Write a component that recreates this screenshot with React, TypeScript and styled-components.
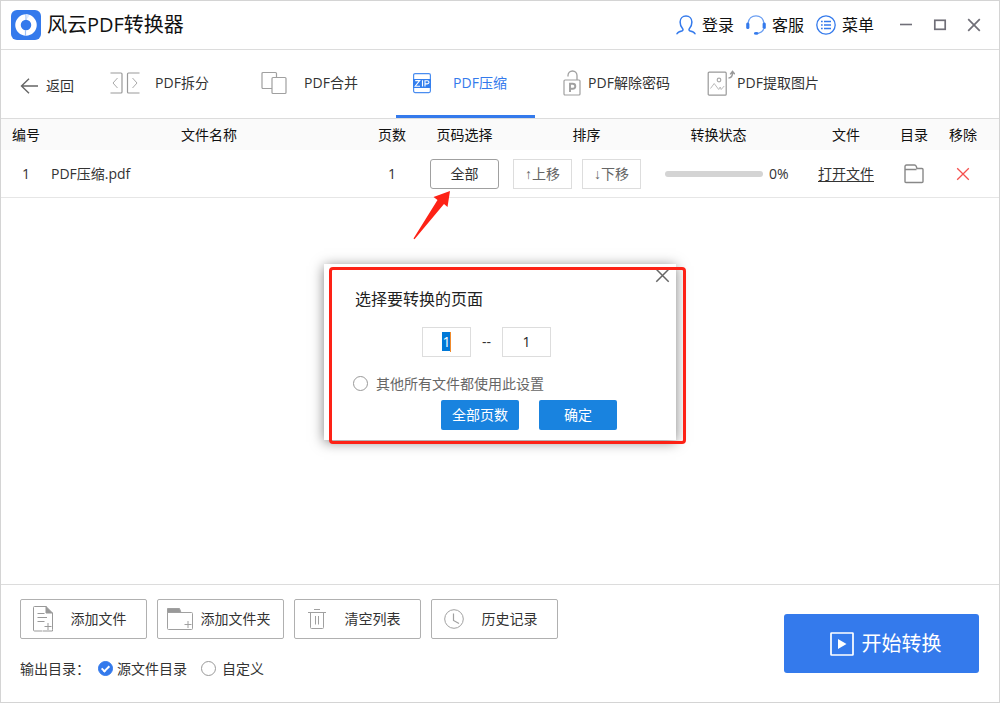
import React, { useEffect, useRef, useState } from "react";
import styled, { createGlobalStyle } from "styled-components";

const GlobalStyle = createGlobalStyle`
  *, *::before, *::after { box-sizing: border-box; }
  body {
    margin: 0;
    background: #fff;
    color: #333;
    font: 14px/20px "Open Sans", "Noto Sans CJK SC", sans-serif;
  }
  button, input { font: inherit; color: inherit; margin: 0; }
  button { padding: 0; border: 0; background: none; cursor: pointer; white-space: nowrap; }
  svg { display: block; flex: none; }
`;

const Window = styled.div`
  position: relative;
  display: flex;
  flex-direction: column;
  min-height: 100vh;
  border: 1px solid #d4d4d4;
`;

/* Title bar */
const TitleBar = styled.header`
  display: flex;
  align-items: center;
  height: 49px;
  padding: 0 18px 0 10px;
  border-bottom: 1px solid #dcdcdc;
  color: #111;
`;

const AppTitle = styled.h1`
  flex: 1;
  margin: 0 0 0 6px;
  font-size: 20px;
  line-height: 28px;
  font-weight: 400;
`;

const AccountActions = styled.div`
  display: flex;
  gap: 12px;
`;

const AccountButton = styled.button`
  display: flex;
  align-items: center;
  gap: 6px;
  font-size: 16px;
  line-height: 24px;
`;

const WindowControls = styled.div`
  display: flex;
  gap: 20px;
  margin-left: 25px;
`;

/* Tool tabs */
const ToolBar = styled.nav`
  display: flex;
  align-items: stretch;
  height: 69px;
  padding-left: 19px;
  border-bottom: 1px solid #dcdcdc;
`;

const BackButton = styled.button`
  display: flex;
  align-items: center;
  gap: 7px;
  margin-right: 24px;
  padding-top: 3px;
`;

const Tabs = styled.div`
  display: flex;
  gap: 10px;
`;

const Tab = styled.button<{ $active?: boolean }>`
  display: flex;
  align-items: center;
  width: 139px;
  padding: 0 14px 0 11px;
  border-bottom: 3px solid ${(p) => (p.$active ? "#347aec" : "transparent")};
  color: ${(p) => (p.$active ? "#347aec" : "#333")};
`;

const TabIcon = styled.span`
  display: flex;
  flex: none;
  justify-content: center;
  width: 32px;
`;

const TabLabel = styled.span`
  flex: 1;
  text-align: center;
`;

/* File list */
const Main = styled.main`
  flex: 1;
`;

const FileTable = styled.table`
  width: 100%;
  table-layout: fixed;
  border-spacing: 0;
`;

const Col = styled.col<{ $width?: number }>`
  width: ${(p) => (p.$width ? `${p.$width}px` : "auto")};
`;

const HeadCell = styled.th<{ $end?: number }>`
  height: 31px;
  padding: 1px ${(p) => p.$end ?? 0}px 0 0;
  background: #fafafa;
  color: #111;
  font-weight: 400;
`;

const Cell = styled.td<{ $left?: boolean; $end?: number }>`
  height: 48px;
  padding: 1px ${(p) => p.$end ?? 0}px 0 0;
  border-bottom: 1px solid #e6e6e6;
  text-align: ${(p) => (p.$left ? "left" : "center")};
`;

const RangeAnchor = styled.div`
  position: relative;
  display: flex;
  justify-content: center;
`;

const RangeButton = styled.button`
  width: 69px;
  height: 30px;
  border: 1px solid #a0a0a0;
  border-radius: 3px;
`;

const Pointer = styled.svg`
  position: absolute;
  top: 31px;
  right: 61px;
`;

const MoveGroup = styled.div`
  display: flex;
  gap: 10px;
  padding-left: 1px;
`;

const MoveButton = styled.button`
  width: 59px;
  height: 30px;
  border: 1px solid #ddd;
  color: #666;
`;

const Arrow = styled.span`
  font-family: "Liberation Sans", sans-serif;
`;

const Progress = styled.div`
  display: flex;
  align-items: center;
  gap: 6px;
  padding-left: 4px;
`;

const ProgressTrack = styled.div`
  width: 98px;
  height: 6px;
  overflow: hidden;
  border-radius: 3px;
  background: #d4d4d4;
`;

const ProgressFill = styled.div`
  height: 100%;
  background: #347aec;
`;

const FileLink = styled.a`
  color: #333;
  text-decoration: underline;
  text-underline-offset: 2px;
`;

const IconButton = styled.button`
  display: block;
  margin: 0 auto;
`;

/* Bottom bar */
const BottomBar = styled.footer`
  display: flex;
  align-items: center;
  justify-content: space-between;
  min-height: 118px;
  padding: 0 20px 0 19px;
  border-top: 1px solid #dcdcdc;
`;

const BottomLeft = styled.div`
  display: flex;
  flex-direction: column;
  gap: 20px;
  padding-bottom: 10px;
`;

const ListActions = styled.div`
  display: flex;
  gap: 10px;
`;

const ListButton = styled.button`
  display: flex;
  align-items: center;
  gap: 7px;
  width: 127px;
  height: 40px;
  padding: 0 12px 0 9px;
  border: 1px solid #b0b0b0;
  border-radius: 2px;
`;

const ListIcon = styled.span`
  display: flex;
  flex: none;
  justify-content: center;
  width: 26px;
`;

const ListLabel = styled.span`
  flex: 1;
  text-align: center;
`;

const OutputRow = styled.fieldset`
  display: flex;
  align-items: center;
  margin: 0;
  padding: 0;
  border: 0;
`;

const OutputTitle = styled.span`
  width: 78px;
`;

const Choice = styled.label<{ $gap: number; $muted?: boolean }>`
  display: flex;
  align-items: center;
  gap: ${(p) => p.$gap}px;
  color: ${(p) => (p.$muted ? "#666" : "#333")};
  & + & { margin-left: 14px; }
`;

const RoundInput = styled.input`
  appearance: none;
  position: relative;
  width: 15px;
  height: 15px;
  border: 1px solid #999;
  border-radius: 50%;
  background: #fff;

  &:checked {
    border-color: #347aec;
    background: #347aec;
  }
  &:checked::after {
    content: "";
    position: absolute;
    top: 2px;
    left: 4px;
    width: 5px;
    height: 8px;
    border: solid #fff;
    border-width: 0 2px 2px 0;
    transform: rotate(45deg);
  }
`;

const StartButton = styled.button`
  display: flex;
  align-items: center;
  justify-content: center;
  gap: 8px;
  width: 195px;
  height: 59px;
  padding-left: 8px;
  border-radius: 3px;
  background: #347aec;
  color: #fff;
  font-size: 20px;
  line-height: 28px;
`;

/* Page range dialog */
const Overlay = styled.div`
  position: absolute;
  inset: 0;
  display: flex;
  align-items: center;
  justify-content: center;
  pointer-events: none;
`;

const Dialog = styled.section`
  position: relative;
  width: 352px;
  padding: 25px 29px 10px;
  background: #fff;
  box-shadow: 0 2px 12px rgba(0, 0, 0, 0.5);
  pointer-events: auto;
`;

const Highlight = styled.div`
  position: absolute;
  inset: 3px -10px -4px 5px;
  border: 3px solid #fd2216;
  border-radius: 4px;
  pointer-events: none;
`;

const CloseButton = styled.button`
  position: absolute;
  top: 4px;
  right: 6px;
`;

const DialogTitle = styled.h2`
  margin: 0;
  padding-left: 2px;
  font-size: 16px;
  line-height: 20px;
  font-weight: 400;
  color: #222;
`;

const RangeRow = styled.div`
  display: flex;
  align-items: center;
  margin: 18px 0 17px;
  padding-left: 69px;
`;

const PageField = styled.span`
  position: relative;
  display: flex;
`;

const PageInput = styled.input`
  width: 49px;
  height: 30px;
  padding: 0;
  border: 1px solid #ddd;
  border-radius: 0;
  outline: 0;
  text-align: center;
  color: #222;
  &::selection { background: #0078d7; color: #fff; }
`;

const Caret = styled.i`
  position: absolute;
  top: 5px;
  left: 28px;
  width: 1px;
  height: 20px;
  background: #f08a2c;
`;

const Dash = styled.span`
  width: 31px;
  text-align: center;
`;

const DialogActions = styled.div`
  display: flex;
  gap: 20px;
  margin-top: 6px;
  padding-left: 88px;
`;

const DialogButton = styled.button`
  width: 78px;
  height: 30px;
  border-radius: 2px;
  background: #1983df;
  color: #fff;
`;

const Logo = () => (
  <svg width="30" height="30" viewBox="0 0 30 30" aria-hidden="true">
    <rect width="30" height="30" rx="6" fill="#347aec" />
    <circle cx="15" cy="15" r="8" fill="none" stroke="#fff" strokeWidth="5.500" />
    <path d="M15 4v6M14.500 20v6" stroke="#9fc2f8" strokeWidth="1.200" />
    <path d="M15 4l3.500 1.500-2.500 3.500z" fill="#dce9fd" />
  </svg>
);

const UserIcon = () => (
  <svg width="20" height="20" viewBox="0 0 20 20" fill="none" stroke="#347aec" strokeWidth="1.500" strokeLinecap="round" aria-hidden="true">
    <path d="M1 18.800c.8-2 2.800-2.400 5-2.900 1.200-.3 1.300-1.500.5-2.400C5 11.800 4.100 9.400 4.100 6.900 4.100 3.500 6.600 1 10 1s5.900 2.500 5.900 5.900c0 2.500-.9 4.900-2.400 6.600-.8.9-.7 2.100.5 2.400 2.200.5 4.200.9 5 2.900" />
  </svg>
);

const HeadsetIcon = () => (
  <svg width="20" height="20" viewBox="0 0 20 20" aria-hidden="true">
    <path d="M2 8.500C2.500 3.500 6 .900 10 .900s7.500 2.600 8 7.600" fill="none" stroke="#6a9ef2" strokeWidth="1.300" />
    <rect x="0.200" y="7.500" width="3.200" height="6.500" rx="1.500" fill="#347aec" />
    <rect x="16.600" y="7.500" width="3.200" height="6.500" rx="1.500" fill="#347aec" />
    <path d="M18 13c-.8 3-2.800 4.700-6 5.300" fill="none" stroke="#6a9ef2" strokeWidth="1.200" />
    <ellipse cx="10.200" cy="18.400" rx="2.300" ry="1.400" fill="#347aec" />
  </svg>
);

const MenuIcon = () => (
  <svg width="20" height="20" viewBox="0 0 20 20" fill="none" stroke="#347aec" aria-hidden="true">
    <circle cx="10" cy="10" r="9.200" strokeWidth="1.300" />
    <path d="M5 6.500h1.700M5 10h1.700M5 13.500h1.700M8 6.500h7M8 10h7M8 13.500h7" strokeWidth="1.600" />
  </svg>
);

const MinimizeIcon = () => (
  <svg width="14" height="14" viewBox="0 0 14 14" aria-hidden="true">
    <path d="M1 6.500h12" stroke="#706f78" strokeWidth="1.600" />
  </svg>
);

const MaximizeIcon = () => (
  <svg width="14" height="14" viewBox="0 0 14 14" aria-hidden="true">
    <rect x="1.800" y="2.300" width="10.400" height="9" fill="none" stroke="#706f78" strokeWidth="1.700" />
  </svg>
);

const CrossIcon = ({ size = 14, color = "#706f78", weight = 1.7 }: { size?: number; color?: string; weight?: number }) => (
  <svg width={size} height={size} viewBox="0 0 14 14" aria-hidden="true">
    <path d="M1.200 1.200l11.600 11.600M12.800 1.200L1.200 12.800" stroke={color} strokeWidth={weight} />
  </svg>
);

const BackIcon = () => (
  <svg width="19" height="16" viewBox="0 0 19 16" fill="none" stroke="#666" strokeWidth="1.400" aria-hidden="true">
    <path d="M18 8H1.500M9 .800L1.500 8 9 15.200" />
  </svg>
);

const SplitIcon = () => (
  <svg width="30" height="22" viewBox="0 0 30 22" fill="none" aria-hidden="true">
    <path d="M.500 1h10.500q1 0 1 1v18q0 1-1 1H.500M29.500 1H18.500q-1 0-1 1v18q0 1 1 1h11" stroke="#999" strokeWidth="1.200" />
    <path d="M7.500 6L3 11l4.500 5M22.500 6l4.500 5-4.500 5" stroke="#aaa" />
  </svg>
);

const MergeIcon = () => (
  <svg width="26" height="24" viewBox="0 0 26 24" fill="#fff" stroke="#a0a0a0" strokeWidth="1.200" aria-hidden="true">
    <rect x="1" y="1.500" width="14.500" height="16" rx="1" />
    <rect x="11" y="6.500" width="14" height="16" rx="1" />
  </svg>
);

const ZipIcon = () => (
  <svg width="22" height="22" viewBox="0 0 22 22" fill="none" aria-hidden="true">
    <rect x="1.600" y="1.600" width="16.800" height="19" rx="1.500" stroke="#4a8df0" strokeWidth="1.200" />
    <path d="M1 7h18v9H1z" fill="#347fee" />
    <path d="M3.200 8.600h4.500l-4.500 5.600h4.800M10.500 8.300v6.200M13 14.500V8.700h2.200q1.800 0 1.800 1.600t-1.800 1.600H13" stroke="#fff" strokeWidth="1.100" />
  </svg>
);

const UnlockIcon = () => (
  <svg width="18" height="26" viewBox="0 0 18 26" fill="none" stroke="#a0a0a0" aria-hidden="true">
    <rect x="1" y="10" width="16" height="15" rx="1" strokeWidth="1.200" />
    <path d="M5 6.500V5.500a4.500 4.500 0 0 1 9 0V10" strokeWidth="1.300" />
    <path d="M7 22v-8.300h2.700q2.600 0 2.600 2.500t-2.600 2.500H7" strokeWidth="1.900" />
  </svg>
);

const PictureIcon = () => (
  <svg width="28" height="26" viewBox="0 0 28 26" fill="none" stroke="#999" aria-hidden="true">
    <rect x="1.200" y="2.200" width="18" height="23" rx="1" strokeWidth="1.200" />
    <circle cx="12" cy="10" r="1.800" stroke="#aaa" strokeWidth="1.200" />
    <path d="M3.500 18.500l3.700-5 4.500 6 1.500-2.500 1 2.500 3-3.500" stroke="#bbb" />
    <path d="M21.500 8c2.500 0 4-1.500 4-5.500M23.200 4.400l2.300-3 2.200 2.800" strokeWidth="1.500" />
  </svg>
);

const FolderIcon = () => (
  <svg width="20" height="20" viewBox="0 0 20 20" fill="none" stroke="#888" strokeWidth="1.400" strokeLinejoin="round" aria-hidden="true">
    <path d="M1 17.500V2.500q0-1.500 1.500-1.500h8q1.200 0 1.700 1.200l.8 2.300h5q1 0 1 1v12q0 1-1 1H2q-1 0-1-1zM1 5.500h11.500" />
  </svg>
);

const AddFileIcon = () => (
  <svg width="20" height="26" viewBox="0 0 20 26" fill="none" stroke="#999" aria-hidden="true">
    <path d="M9.500 25H1.500q-1 0-1-1V1.500q0-1 1-1h12M19.500 7v16.500" />
    <path d="M13 .500l6.500 6.500H13z" fill="#999" />
    <path d="M4.500 7.500h7M4.500 11.500h9.500M4.500 15.500h7M11.500 20.500h7M15 17v7M19.500 23.500V25H10" />
  </svg>
);

const AddFolderIcon = () => (
  <svg width="26" height="22" viewBox="0 0 26 22" fill="none" stroke="#a0a0a0" aria-hidden="true">
    <path d="M.500.500h12L14 4.500H.500z" fill="#999" />
    <path d="M.500 4.500h24q1 0 1 1v15q0 1-1 1h-23q-1 0-1-1zM17.500 16.500h7M21 13v7" />
  </svg>
);

const TrashIcon = () => (
  <svg width="18" height="20" viewBox="0 0 18 20" fill="none" stroke="#a0a0a0" aria-hidden="true">
    <path d="M0 3.500h18M6 .500h6M2.500 3.500v15q0 1 1 1h11q1 0 1-1v-15M7.500 7v8.500M10.500 7v8.500" />
  </svg>
);

const ClockIcon = () => (
  <svg width="20" height="20" viewBox="0 0 20 20" fill="none" stroke="#a0a0a0" aria-hidden="true">
    <circle cx="10" cy="10" r="9.300" />
    <path d="M9.500 4.500v7l5.500 3" strokeWidth="1.200" />
  </svg>
);

const PlayIcon = () => (
  <svg width="24" height="24" viewBox="0 0 24 24" aria-hidden="true">
    <rect x="1" y="1" width="22" height="22" rx="0.500" fill="none" stroke="#fff" strokeWidth="1.700" />
    <path d="M8 7l8.500 5L8 17z" fill="#fff" />
  </svg>
);

const tabs = [
  { label: "PDF拆分", Icon: SplitIcon },
  { label: "PDF合并", Icon: MergeIcon },
  { label: "PDF压缩", Icon: ZipIcon },
  { label: "PDF解除密码", Icon: UnlockIcon },
  { label: "PDF提取图片", Icon: PictureIcon },
];

const columns = [
  { label: "编号", width: 50 },
  { label: "文件名称" },
  { label: "页数", width: 50 },
  { label: "页码选择", width: 95 },
  { label: "排序", width: 149 },
  { label: "转换状态", width: 136, end: 21 },
  { label: "文件", width: 98 },
  { label: "目录", width: 38 },
  { label: "移除", width: 66, end: 6 },
];

const files = [{ name: "PDF压缩.pdf", pages: 1, progress: 0 }];

const listActions = [
  { label: "添加文件", Icon: AddFileIcon },
  { label: "添加文件夹", Icon: AddFolderIcon },
  { label: "清空列表", Icon: TrashIcon },
  { label: "历史记录", Icon: ClockIcon },
];

function PageRangeDialog() {
  const firstPage = useRef<HTMLInputElement>(null);

  useEffect(() => {
    firstPage.current?.focus();
    firstPage.current?.select();
  }, []);

  return (
    <Overlay>
      <Dialog role="dialog" aria-labelledby="range-title">
        <DialogTitle id="range-title">选择要转换的页面</DialogTitle>
        <RangeRow>
          <PageField>
            <PageInput ref={firstPage} aria-label="起始页" defaultValue="1" />
            <Caret />
          </PageField>
          <Dash>--</Dash>
          <PageField>
            <PageInput aria-label="结束页" defaultValue="1" />
          </PageField>
        </RangeRow>
        <Choice $gap={8} $muted>
          <RoundInput type="checkbox" />
          其他所有文件都使用此设置
        </Choice>
        <DialogActions>
          <DialogButton type="button">全部页数</DialogButton>
          <DialogButton type="button">确定</DialogButton>
        </DialogActions>
        <CloseButton type="button" aria-label="关闭">
          <CrossIcon size={15} color="#666" weight={1.4} />
        </CloseButton>
        <Highlight />
      </Dialog>
    </Overlay>
  );
}

export default function App() {
  const [activeTab, setActiveTab] = useState("PDF压缩");

  return (
    <Window>
      <GlobalStyle />
      <TitleBar>
        <Logo />
        <AppTitle>风云PDF转换器</AppTitle>
        <AccountActions>
          <AccountButton type="button"><UserIcon />登录</AccountButton>
          <AccountButton type="button"><HeadsetIcon />客服</AccountButton>
          <AccountButton type="button"><MenuIcon />菜单</AccountButton>
        </AccountActions>
        <WindowControls>
          <button type="button" aria-label="最小化"><MinimizeIcon /></button>
          <button type="button" aria-label="最大化"><MaximizeIcon /></button>
          <button type="button" aria-label="关闭窗口"><CrossIcon /></button>
        </WindowControls>
      </TitleBar>

      <ToolBar>
        <BackButton type="button"><BackIcon />返回</BackButton>
        <Tabs>
          {tabs.map(({ label, Icon }) => (
            <Tab key={label} type="button" $active={label === activeTab} onClick={() => setActiveTab(label)}>
              <TabIcon><Icon /></TabIcon>
              <TabLabel>{label}</TabLabel>
            </Tab>
          ))}
        </Tabs>
      </ToolBar>

      <Main>
        <FileTable>
          <colgroup>
            {columns.map((c) => <Col key={c.label} $width={c.width} />)}
          </colgroup>
          <thead>
            <tr>
              {columns.map((c) => <HeadCell key={c.label} scope="col" $end={c.end}>{c.label}</HeadCell>)}
            </tr>
          </thead>
          <tbody>
            {files.map((file, index) => (
              <tr key={file.name}>
                <Cell>{index + 1}</Cell>
                <Cell $left>{file.name}</Cell>
                <Cell>{file.pages}</Cell>
                <Cell>
                  <RangeAnchor>
                    <RangeButton type="button">全部</RangeButton>
                    <Pointer width="38" height="50" viewBox="0 0 38 50" aria-hidden="true">
                      <path d="M37 1L20.500 7l4 3L.500 48.500l1 .800L31 14l3.500 3z" fill="#fd2216" />
                    </Pointer>
                  </RangeAnchor>
                </Cell>
                <Cell>
                  <MoveGroup>
                    <MoveButton type="button"><Arrow>↑</Arrow>上移</MoveButton>
                    <MoveButton type="button"><Arrow>↓</Arrow>下移</MoveButton>
                  </MoveGroup>
                </Cell>
                <Cell>
                  <Progress>
                    <ProgressTrack role="progressbar" aria-label="转换进度" aria-valuenow={file.progress}>
                      <ProgressFill style={{ width: `${file.progress}%` }} />
                    </ProgressTrack>
                    {file.progress}%
                  </Progress>
                </Cell>
                <Cell><FileLink href="#open">打开文件</FileLink></Cell>
                <Cell><IconButton type="button" aria-label="打开目录"><FolderIcon /></IconButton></Cell>
                <Cell $end={6}>
                  <IconButton type="button" aria-label="移除文件"><CrossIcon color="#f5504e" weight={1.3} /></IconButton>
                </Cell>
              </tr>
            ))}
          </tbody>
        </FileTable>
      </Main>

      <BottomBar>
        <BottomLeft>
          <ListActions>
            {listActions.map(({ label, Icon }) => (
              <ListButton key={label} type="button">
                <ListIcon><Icon /></ListIcon>
                <ListLabel>{label}</ListLabel>
              </ListButton>
            ))}
          </ListActions>
          <OutputRow aria-label="输出目录">
            <OutputTitle>输出目录：</OutputTitle>
            <Choice $gap={4}>
              <RoundInput type="radio" name="output" defaultChecked />
              源文件目录
            </Choice>
            <Choice $gap={6}>
              <RoundInput type="radio" name="output" />
              自定义
            </Choice>
          </OutputRow>
        </BottomLeft>
        <StartButton type="button"><PlayIcon />开始转换</StartButton>
      </BottomBar>

      <PageRangeDialog />
    </Window>
  );
}
